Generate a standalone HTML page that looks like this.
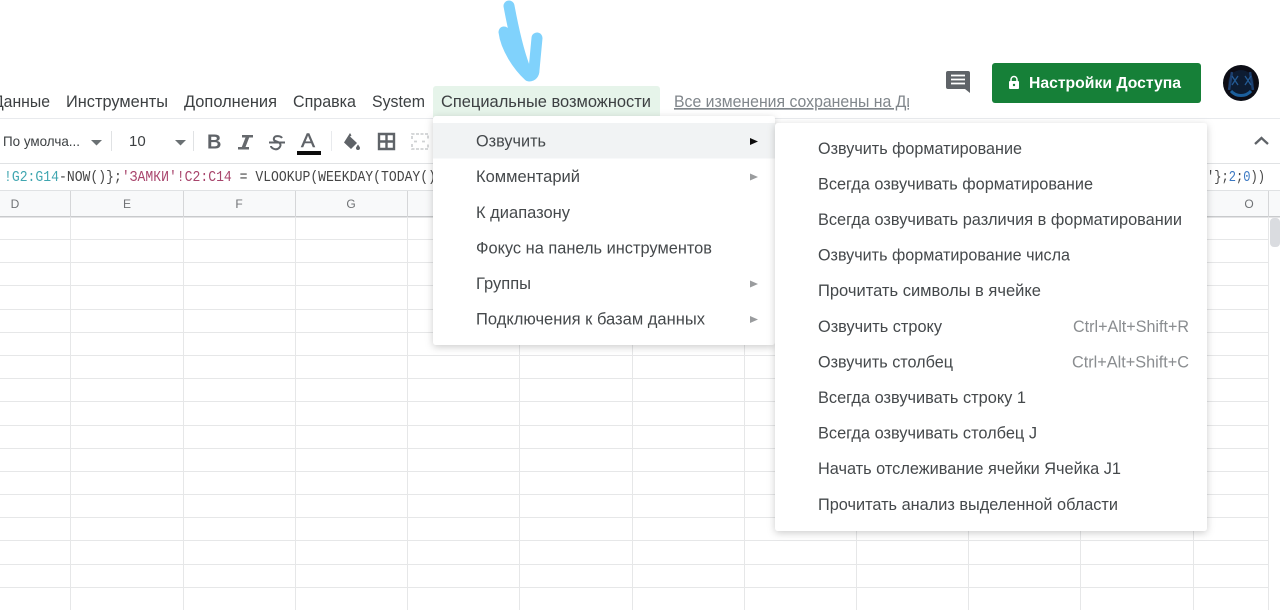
<!DOCTYPE html>
<html><head><meta charset="utf-8"><style>
html,body{margin:0;padding:0;background:#fff;overflow:hidden}
svg{display:block}
text{font-family:"Liberation Sans",sans-serif;white-space:pre}
.m{font-size:16.5px;fill:#44484c}
.t{font-size:16.5px;fill:#3c4043}
.s{font-size:16.5px;fill:#8a8d90}
.f{font-family:"Liberation Mono",monospace;font-size:14.5px}
.h{font-size:12px;fill:#6f7275}
</style></head><body>
<svg width="1280" height="610" viewBox="0 0 1280 610" xmlns="http://www.w3.org/2000/svg">
<defs>
<filter id="sh" x="-10%" y="-10%" width="120%" height="120%"><feDropShadow dx="0" dy="2" stdDeviation="4" flood-color="#000" flood-opacity=".2"/></filter>
<filter id="b"><feGaussianBlur stdDeviation="0.35"/></filter>
<clipPath id="sv"><rect x="660" y="85" width="249" height="30"/></clipPath>
<clipPath id="av"><circle cx="1241" cy="83" r="18"/></clipPath>
</defs>
<g filter="url(#b)">
<!-- menu bar -->
<text class="t" x="-7" y="107" textLength="57" lengthAdjust="spacingAndGlyphs">Данные</text>
<text class="t" x="66" y="107" textLength="102" lengthAdjust="spacingAndGlyphs">Инструменты</text>
<text class="t" x="184" y="107" textLength="93" lengthAdjust="spacingAndGlyphs">Дополнения</text>
<text class="t" x="293" y="107" textLength="63" lengthAdjust="spacingAndGlyphs">Справка</text>
<text class="t" x="372" y="107" textLength="53" lengthAdjust="spacingAndGlyphs">System</text>
<path d="M433 89a3 3 0 0 1 3-3h221a3 3 0 0 1 3 3v30H433z" fill="#e6f4ea"/>
<text class="t" x="441" y="107" textLength="210" lengthAdjust="spacingAndGlyphs">Специальные возможности</text>
<g clip-path="url(#sv)"><text x="674" y="107" font-size="16.500" fill="#80868b" text-decoration="underline" textLength="265" lengthAdjust="spacingAndGlyphs">Все изменения сохранены на Диске</text></g>
<!-- header lines -->
<rect x="0" y="118" width="1280" height="1" fill="#e8eaed"/>
<rect x="0" y="163" width="1280" height="1" fill="#e0e2e4"/>
<rect x="0" y="190" width="1280" height="1" fill="#e0e2e4"/>
<rect x="0" y="191" width="1280" height="25" fill="#f8f9fa"/>
<rect x="0" y="216" width="1280" height="1.500" fill="#c8cacc"/>
<!-- grid -->
<g stroke="#e6e7e8" stroke-width="1" fill="none">
<path d="M0 239.500H1268M0 262.500H1268M0 285.500H1268M0 309.500H1268M0 332.500H1268M0 355.500H1268M0 378.500H1268M0 401.500H1268M0 425.500H1268M0 448.500H1268M0 471.500H1268M0 494.500H1268M0 517.500H1268M0 540.500H1268M0 564.500H1268M0 587.500H1268"/>
<path d="M70.500 217V610M183.500 217V610M295.500 217V610M407.500 217V610M519.500 217V610M632.500 217V610M744.500 217V610M856.500 217V610M968.500 217V610M1080.500 217V610M1193.500 217V610M1268.500 217V610"/>
</g>
<g stroke="#d5d6d8" stroke-width="1"><path d="M70.500 191V217M183.500 191V217M295.500 191V217M407.500 191V217M1193.500 191V217M1268.500 191V217"/></g>
<text class="h" x="15" y="208" text-anchor="middle">D</text>
<text class="h" x="127" y="208" text-anchor="middle">E</text>
<text class="h" x="239" y="208" text-anchor="middle">F</text>
<text class="h" x="351" y="208" text-anchor="middle">G</text>
<text class="h" x="1249" y="208" text-anchor="middle">O</text>
<rect x="1270" y="218" width="10" height="29" rx="4" fill="#dadce0"/>
<!-- toolbar -->
<text x="3" y="146" font-size="14" fill="#3c4043" textLength="77" lengthAdjust="spacingAndGlyphs">По умолча...</text>
<path d="M91 140h11l-5.500 5.500z" fill="#6b6f73"/>
<rect x="111" y="131" width="1" height="20" fill="#e0e2e4"/>
<text x="129" y="146" font-size="15" fill="#3c4043">10</text>
<path d="M175 140h11l-5.500 5.500z" fill="#6b6f73"/>
<rect x="193" y="131" width="1" height="20" fill="#e0e2e4"/>
<text x="207" y="148.500" font-size="20" font-weight="700" fill="#5f6368">B</text>
<path d="M242 135h11v2.500h-3.800l-3.700 9.500h3.500v2.500h-11V147h3.800l3.700-9.500H242z" fill="#66696d"/>
<path d="M282 138c-1-2-7-3-8 0s2 3 4 4 4 3 1 6-8 0-8-2M269 142.500h16" fill="none" stroke="#5f6368" stroke-width="2"/>
<text x="301" y="147" font-size="19" fill="#5f6368" stroke="#5f6368" stroke-width=".4" textLength="14" lengthAdjust="spacingAndGlyphs">A</text>
<rect x="297" y="151" width="24" height="4" fill="#111"/>
<rect x="331" y="131" width="1" height="20" fill="#e8eaed"/>
<path d="M350 133l1.500 2.500-1.500 1 7 6.500-6 6-7-6.500zM358 144.500c1 1.500 2 2.500 2 3.500a2 2 0 0 1-4 0c0-1 1-2 2-3.500z" fill="#5f6368"/>
<path d="M379 134h15v15h-15zM386.500 134v15M379 141.500h15" fill="none" stroke="#5f6368" stroke-width="2.400"/>
<path d="M412 139v-5h16v5M412 144v5h16v-5M414 141.500h4M422 141.500h4" fill="none" stroke="#d0d2d4" stroke-width="1.800" stroke-dasharray="3 1.500"/>
<path d="M1255 144l6.500-6 6.500 6" fill="none" stroke="#5f6368" stroke-width="2.300"/>
<!-- formula -->
<text class="f" x="4" y="181" textLength="432" lengthAdjust="spacingAndGlyphs"><tspan fill="#3fa6b0">!G2:G14</tspan><tspan fill="#444">-NOW()};</tspan><tspan fill="#a8446c">'ЗАМКИ'!C2:C14</tspan><tspan fill="#444"> = VLOOKUP(WEEKDAY(TODAY()</tspan></text>
<text class="f" x="1207" y="181" textLength="58" lengthAdjust="spacingAndGlyphs"><tspan fill="#444">'};</tspan><tspan fill="#3b78c2">2</tspan><tspan fill="#444">;</tspan><tspan fill="#3b78c2">0</tspan><tspan fill="#444">))</tspan></text>
<!-- right header -->
<path d="M948 71h20a2 2 0 0 1 2 2v20l-5-4h-17a2 2 0 0 1-2-2V73a2 2 0 0 1 2-2z" fill="#5f6368"/>
<path d="M951 75.500h14M951 79.500h14M951 83.500h14" stroke="#fff" stroke-width="1.700"/>
<rect x="992" y="63" width="209" height="40" rx="3" fill="#188038"/>
<rect x="1009" y="81" width="10" height="8" rx="1" fill="#fff"/>
<path d="M1011 81.500v-2a3 3 0 0 1 6 0v2" fill="none" stroke="#fff" stroke-width="1.500"/>
<circle cx="1014" cy="85" r="1.200" fill="#188038"/>
<text x="1029" y="88" font-size="16" font-weight="700" fill="#fff" textLength="152" lengthAdjust="spacingAndGlyphs">Настройки Доступа</text>
<circle cx="1241" cy="83" r="18" fill="#070b12"/>
<g clip-path="url(#av)"><circle cx="1241" cy="83" r="13" fill="#0d1a30"/><path d="M1232 72l-3 18M1250 72l3 18" stroke="#1d3f70" stroke-width="2.500"/><path d="M1232 76l6 9M1238 76l-6 9M1245 76l6 9M1251 76l-6 9" stroke="#245a94" stroke-width="1.300"/><path d="M1231 91c5 6 15 6 20 0" stroke="#1b5f9c" stroke-width="3" fill="none"/></g>
<!-- arrow -->
<path d="M509 6C512 22 518 50 524 66L529 75M504 32C506 48 518 66 529 76C532 76 534 74 534 70L537 38" fill="none" stroke="#80d2fc" stroke-width="11" stroke-linecap="round" stroke-linejoin="round"/>
<!-- menus -->
<rect x="433" y="116" width="342" height="229" rx="3" fill="#fff" filter="url(#sh)"/>
<rect x="433" y="123" width="342" height="35.500" fill="#f1f3f4"/>
<rect x="775" y="123" width="432" height="408" rx="3" fill="#fff" filter="url(#sh)"/>
<text class="m" x="476" y="146.500" textLength="70" lengthAdjust="spacingAndGlyphs">Озвучить</text>
<text class="m" x="476" y="182" textLength="104" lengthAdjust="spacingAndGlyphs">Комментарий</text>
<text class="m" x="476" y="218" textLength="94" lengthAdjust="spacingAndGlyphs">К диапазону</text>
<text class="m" x="476" y="253.500" textLength="236" lengthAdjust="spacingAndGlyphs">Фокус на панель инструментов</text>
<text class="m" x="476" y="289" textLength="55" lengthAdjust="spacingAndGlyphs">Группы</text>
<text class="m" x="476" y="324.500" textLength="229" lengthAdjust="spacingAndGlyphs">Подключения к базам данных</text>
<path d="M750 138l8 3.500-8 3.500z" fill="#111"/>
<path d="M750 173.500l8 3.500-8 3.500zM750 280.500l8 3.500-8 3.500zM750 316l8 3.500-8 3.500z" fill="#9a9c9e"/>
<text class="m" x="818" y="154" textLength="204" lengthAdjust="spacingAndGlyphs">Озвучить форматирование</text>
<text class="m" x="818" y="189.500" textLength="275" lengthAdjust="spacingAndGlyphs">Всегда озвучивать форматирование</text>
<text class="m" x="818" y="225" textLength="364" lengthAdjust="spacingAndGlyphs">Всегда озвучивать различия в форматировании</text>
<text class="m" x="818" y="260.500" textLength="252" lengthAdjust="spacingAndGlyphs">Озвучить форматирование числа</text>
<text class="m" x="818" y="296" textLength="223" lengthAdjust="spacingAndGlyphs">Прочитать символы в ячейке</text>
<text class="m" x="818" y="332" textLength="124" lengthAdjust="spacingAndGlyphs">Озвучить строку</text>
<text class="m" x="818" y="367.500" textLength="135" lengthAdjust="spacingAndGlyphs">Озвучить столбец</text>
<text class="m" x="818" y="403" textLength="208" lengthAdjust="spacingAndGlyphs">Всегда озвучивать строку 1</text>
<text class="m" x="818" y="438.500" textLength="219" lengthAdjust="spacingAndGlyphs">Всегда озвучивать столбец J</text>
<text class="m" x="818" y="474" textLength="303" lengthAdjust="spacingAndGlyphs">Начать отслеживание ячейки Ячейка J1</text>
<text class="m" x="818" y="510" textLength="300" lengthAdjust="spacingAndGlyphs">Прочитать анализ выделенной области</text>
<text class="s" x="1073" y="332" textLength="116" lengthAdjust="spacingAndGlyphs">Ctrl+Alt+Shift+R</text>
<text class="s" x="1072" y="367.500" textLength="117" lengthAdjust="spacingAndGlyphs">Ctrl+Alt+Shift+C</text>
</g>
</svg>
</body></html>
